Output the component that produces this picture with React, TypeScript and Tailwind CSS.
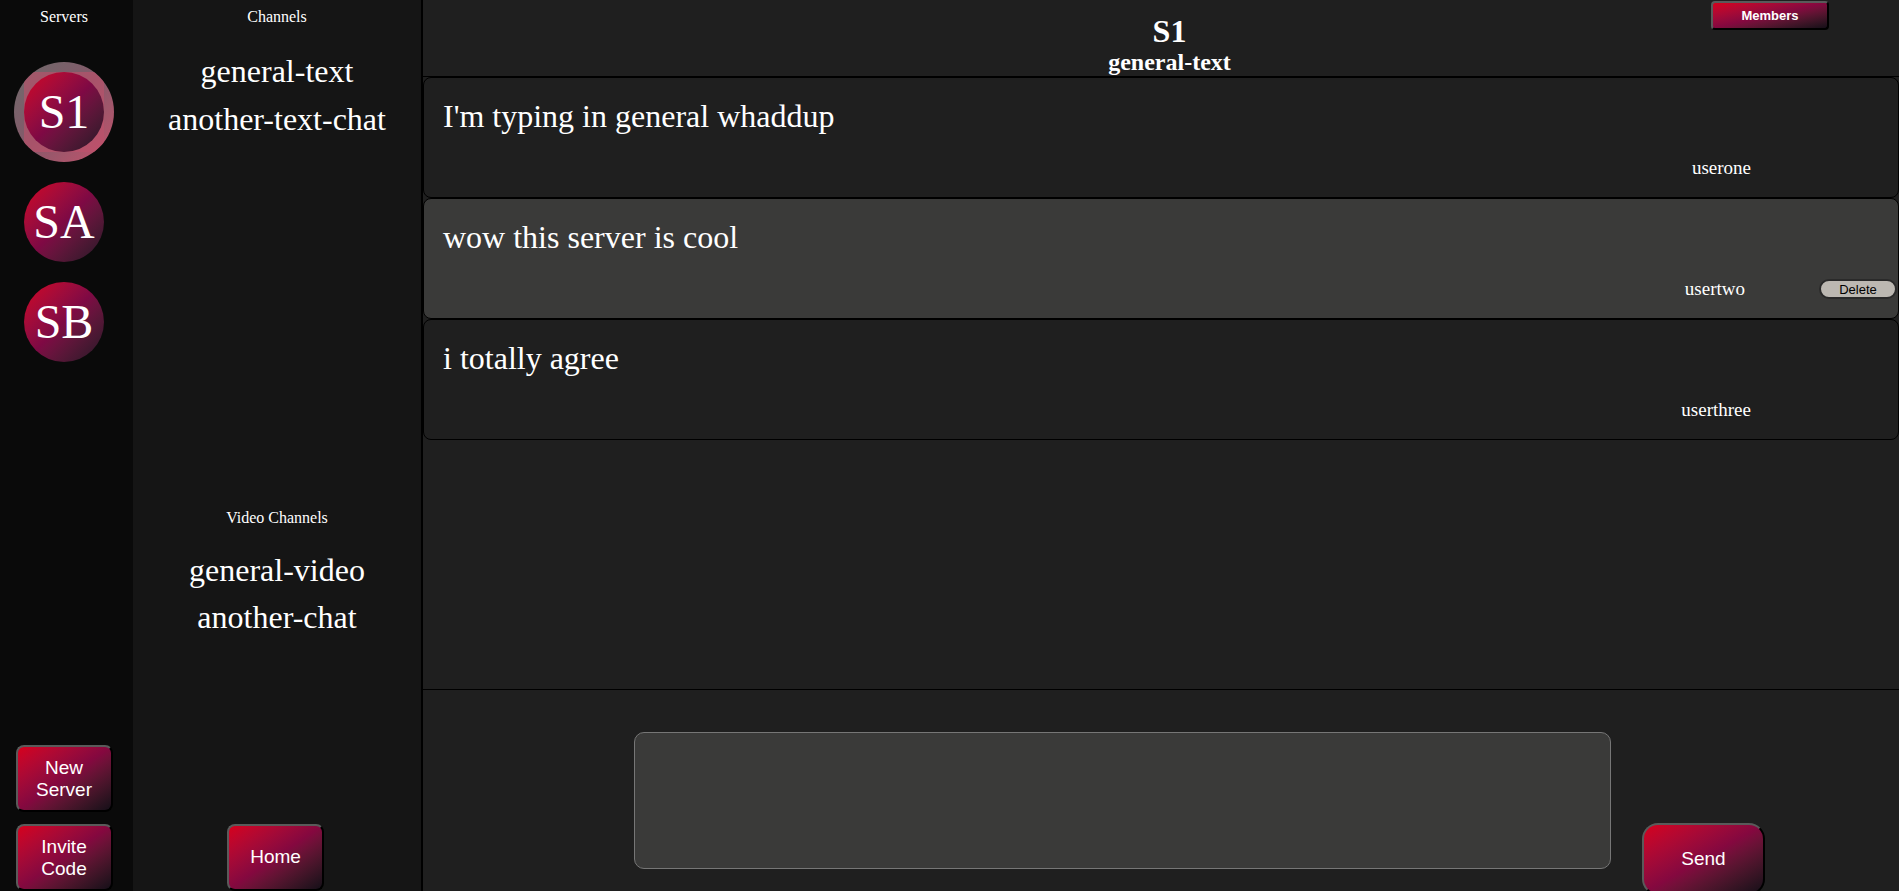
import React from "react";

const serif = "font-['Liberation_Serif',_'Times_New_Roman',_serif]";
const sans = "font-['Liberation_Sans',_Arial,_sans-serif]";

const gradBtn =
  "bg-linear-to-br from-[#d6001a] via-[#84083f] to-[#150f18] border-2 border-t-[#5a5a5a] border-l-[#5a5a5a] border-r-black border-b-black text-white";

function ServerIcon({ label, active }: { label: string; active?: boolean }) {
  const circle = (
    <div
      className={`relative flex h-[80px] w-[80px] items-center justify-center rounded-full bg-linear-to-br from-[#d6001a] via-[#7e0944] to-[#241626] text-[48px] leading-none text-white ${serif}`}
    >
      {label}
    </div>
  );
  if (!active) return circle;
  return (
    <div className="flex h-[100px] w-[100px] items-center justify-center overflow-hidden rounded-full bg-linear-to-br from-[#6a6a6a] via-[#86586a] to-[#c8506c]">
      <div className="flex h-[80px] w-[80px] items-center justify-center bg-[#c0506a]/60">
        {circle}
      </div>
    </div>
  );
}

type Message = { id: number; text: string; user: string; mine?: boolean };

const messages: Message[] = [
  { id: 1, text: "I'm typing in general whaddup", user: "userone" },
  { id: 2, text: "wow this server is cool", user: "usertwo", mine: true },
  { id: 3, text: "i totally agree", user: "userthree" },
];

export default function App() {
  return (
    <div className={`flex h-[891px] w-full overflow-hidden text-white ${serif}`}>
      {/* servers */}
      <div className="flex w-[133px] shrink-0 flex-col items-center bg-[#0a0a0a] pr-[5px] pt-[5px]">
        <p className="text-[16px]">Servers</p>
        <div className="mt-[33px]">
          <ServerIcon label="S1" active />
        </div>
        <div className="mt-[20px]">
          <ServerIcon label="SA" />
        </div>
        <div className="mt-[20px]">
          <ServerIcon label="SB" />
        </div>
        <div className="mt-auto flex flex-col gap-[12px]">
          <button
            className={`h-[67px] w-[97px] rounded-[8px] text-[19px] leading-[22px] ${gradBtn} ${sans}`}
          >
            New
            <br />
            Server
          </button>
          <button
            className={`h-[67px] w-[97px] rounded-[8px] text-[19px] leading-[22px] ${gradBtn} ${sans}`}
          >
            Invite
            <br />
            Code
          </button>
        </div>
      </div>

      {/* channels */}
      <div className="flex w-[290px] shrink-0 flex-col items-center border-r-2 border-black bg-[#151515] pt-[5px]">
        <div className="flex h-[501px] flex-col items-center">
          <p className="text-[16px]">Channels</p>
          <div className="mt-[18px] flex flex-col items-center text-[32px] leading-[48px]">
            <span>general-text</span>
            <span>another-text-chat</span>
          </div>
        </div>
        <p className="text-[16px]">Video Channels</p>
        <div className="mt-[17px] flex flex-col items-center text-[32px] leading-[47px]">
          <span>general-video</span>
          <span>another-chat</span>
        </div>
        <button
          className={`mt-auto mr-[3px] h-[67px] w-[97px] rounded-[8px] text-[19px] ${gradBtn} ${sans}`}
        >
          Home
        </button>
      </div>

      {/* main */}
      <div className="flex min-w-0 flex-1 flex-col bg-[#1f1f1f]">
        <div className="relative flex h-[77px] shrink-0 flex-col items-center border-b border-black pl-[17px] pt-[15px] font-bold">
          <h1 className="text-[32px] leading-[32px]">S1</h1>
          <h2 className="mt-[3px] text-[24px] leading-[24px]">general-text</h2>
          <button
            className={`absolute right-[70px] top-[1px] h-[29px] w-[118px] rounded-[4px] text-[13px] font-bold ${gradBtn} ${sans}`}
          >
            Members
          </button>
        </div>

        <div className="flex-1 overflow-hidden">
          {messages.map((m) => (
            <div
              key={m.id}
              className={`flex h-[121px] flex-col rounded-[8px] border border-black pb-[19px] pl-[19px] pt-[22px] ${
                m.mine ? "bg-[#3a3a39]" : "bg-[#1f1f1f]"
              }`}
            >
              <p className="text-[32px] leading-[33px]">{m.text}</p>
              <div className="mt-auto flex h-[20px] items-center justify-end">
                <span className={`text-[19px] ${m.mine ? "mr-[74px]" : "mr-[147px]"}`}>
                  {m.user}
                </span>
                {m.mine && (
                  <button
                    className={`mr-[1px] h-[20px] w-[78px] rounded-full border-2 border-[#2a2a2a] bg-[#bcb8b2] text-[13px] leading-none text-black ${sans}`}
                  >
                    Delete
                  </button>
                )}
              </div>
            </div>
          ))}
        </div>

        <div className="flex h-[202px] shrink-0 items-start border-t border-black pl-[211px] pt-[42px]">
          <textarea className="h-[137px] w-[977px] resize-none rounded-[10px] border border-[#767676] bg-[#3a3a39] outline-none" />
          <button
            className={`ml-[31px] mt-[91px] h-[72px] w-[123px] shrink-0 rounded-[16px] text-[19px] ${gradBtn} ${sans}`}
          >
            Send
          </button>
        </div>
      </div>
    </div>
  );
}
